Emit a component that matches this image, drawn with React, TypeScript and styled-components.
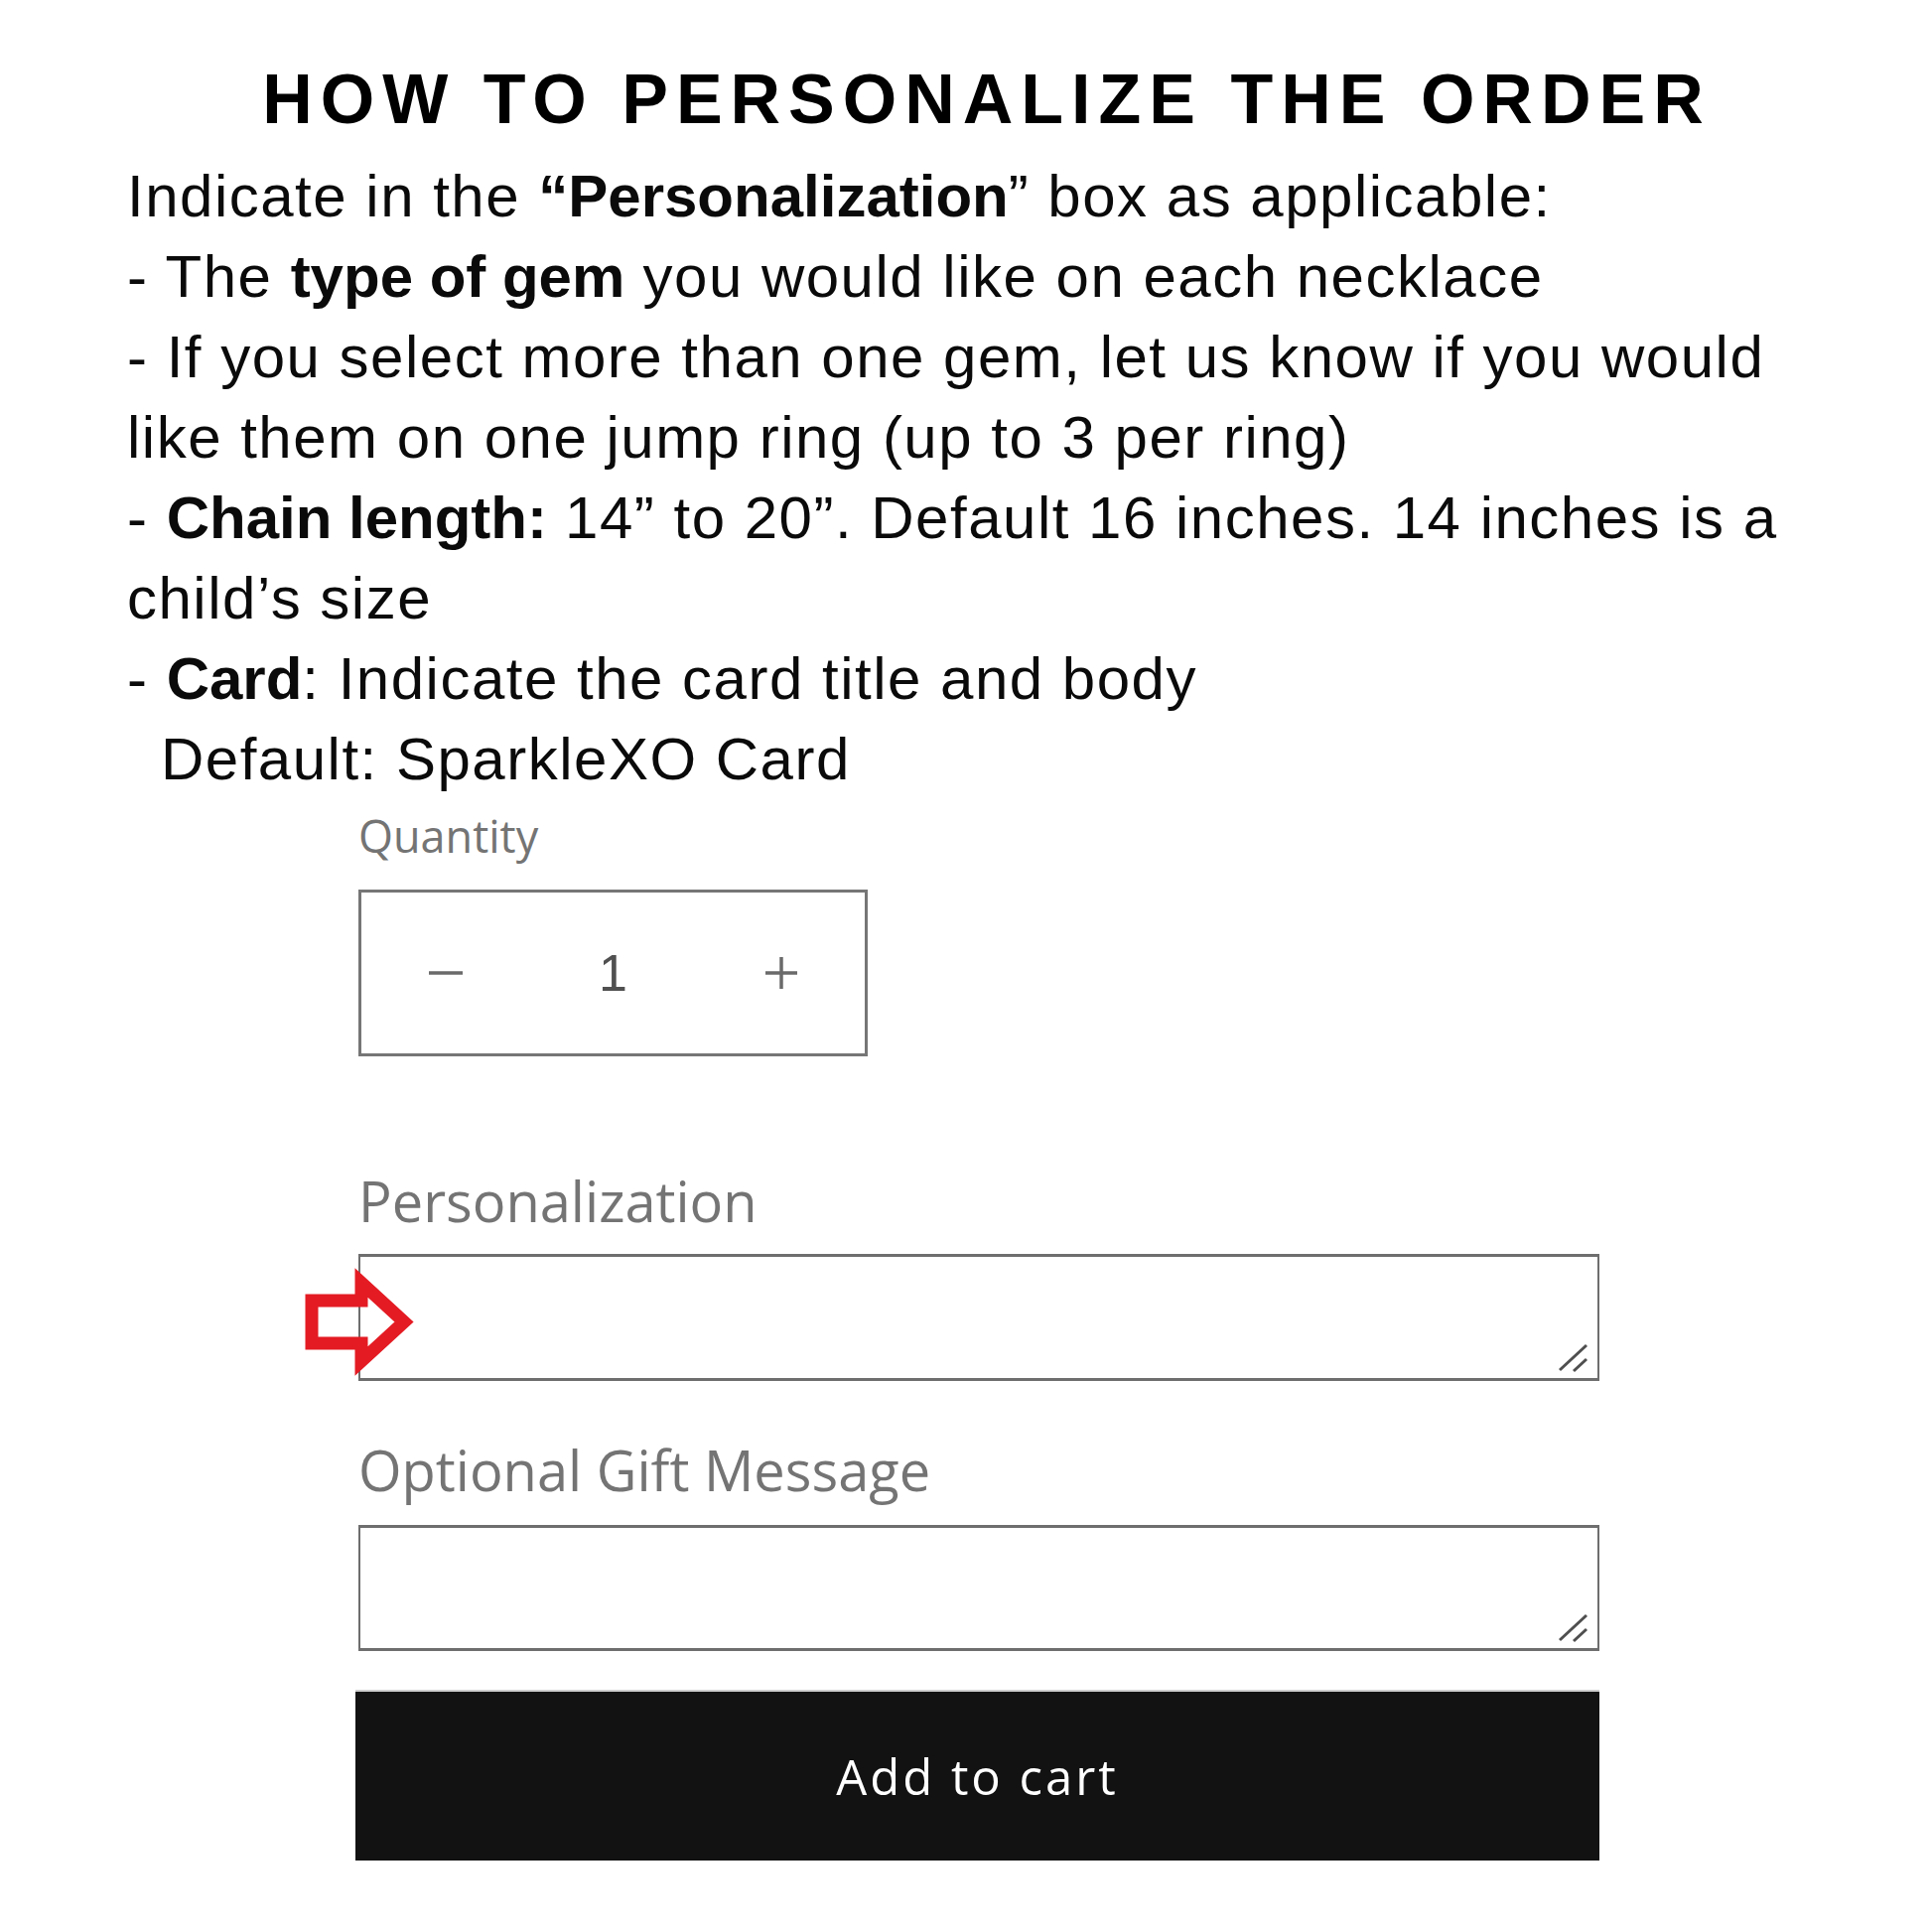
import * as React from 'react'
import styled, { createGlobalStyle } from 'styled-components'

const GlobalStyle = createGlobalStyle`
  html, body {
    margin: 0;
    padding: 0;
    background: #fff;
  }
  body {
    font-family: 'Liberation Sans', Arial, sans-serif;
    color: #000;
  }
`

export default function App() {
  return (
    <>
      <GlobalStyle />
      <Page>
        <Title>HOW TO PERSONALIZE THE ORDER</Title>
        <Instructions>
          <Line>
            Indicate in the <b>“Personalization</b>” box as applicable:
          </Line>
          <Line>
            - The <b>type of gem</b> you would like on each necklace
          </Line>
          <Line>- If you select more than one gem, let us know if you would</Line>
          <Line>like them on one jump ring (up to 3 per ring)</Line>
          <Line>
            - <b>Chain length:</b> 14” to 20”. Default 16 inches. 14 inches is a
          </Line>
          <Line>child’s size</Line>
          <Line>
            - <b>Card</b>: Indicate the card title and body
          </Line>
          <Line $indent>Default: SparkleXO Card</Line>
        </Instructions>

        <Form onSubmit={e => e.preventDefault()}>
          <Label htmlFor='Quantity' $size={45} $gap={10}>
            Quantity
          </Label>
          <QuantityBox>
            <StepButton type='button' aria-label='Decrease quantity'>
              <svg width='36' height='36' viewBox='0 0 36 36'>
                <line x1='1' y1='18' x2='35' y2='18' stroke='#6a6a6a' strokeWidth='3.5' />
              </svg>
            </StepButton>
            <QuantityInput id='Quantity' type='text' defaultValue='1' />
            <StepButton type='button' aria-label='Increase quantity'>
              <svg width='34' height='34' viewBox='0 0 34 34'>
                <line x1='1' y1='17' x2='33' y2='17' stroke='#6a6a6a' strokeWidth='3.5' />
                <line x1='17' y1='1' x2='17' y2='33' stroke='#6a6a6a' strokeWidth='3.5' />
              </svg>
            </StepButton>
          </QuantityBox>

          <Label htmlFor='Personalization' $size={56} $gap={112}>
            Personalization
          </Label>
          <FieldWrap $gap={20}>
            <TextArea id='Personalization' $height={128} />
            <Arrow width='112' height='100' viewBox='0 0 112 100'>
              <polygon
                points='6,28 56,28 56,10 99,49.5 56,89 56,71 6,71'
                fill='none'
                stroke='#e41b23'
                strokeWidth='13'
                strokeLinejoin='miter'
              />
            </Arrow>
            <ResizeHandle />
          </FieldWrap>

          <Label htmlFor='GiftMessage' $size={56} $gap={56}>
            Optional Gift Message
          </Label>
          <FieldWrap $gap={22}>
            <TextArea id='GiftMessage' $height={127} />
            <ResizeHandle />
          </FieldWrap>

          <CartButton type='submit'>Add to cart</CartButton>
        </Form>
      </Page>
    </>
  )
}

function ResizeHandle() {
  return (
    <Handle width='34' height='32' viewBox='0 0 34 32'>
      <line x1='2' y1='28' x2='29' y2='3' stroke='#4f4f4f' strokeWidth='3' />
      <line x1='16' y1='29' x2='29' y2='17' stroke='#4f4f4f' strokeWidth='3' />
    </Handle>
  )
}

const Page = styled.main`
  width: 1946px;
  padding-top: 65px;
  box-sizing: border-box;
`

const Title = styled.h1`
  margin: 0;
  padding-left: 42px;
  text-align: center;
  font-family: 'Liberation Sans', Arial, sans-serif;
  font-weight: 700;
  font-size: 70px;
  line-height: 70px;
  letter-spacing: 8px;
  color: #000;
`

const Instructions = styled.div`
  margin: 22px 0 0 128px;
  font-size: 60px;
  line-height: 81px;
  letter-spacing: 1.5px;
  color: #0a0a0a;

  b {
    font-weight: 700;
    letter-spacing: 0;
  }
`

const Line = styled.div<{ $indent?: boolean }>`
  white-space: nowrap;
  padding-left: ${p => (p.$indent ? '34px' : '0')};
`

const Form = styled.form`
  margin-left: 361px;
  width: 1250px;
  display: flex;
  flex-direction: column;
  align-items: flex-start;
`

const Label = styled.label<{ $size: number; $gap: number }>`
  margin-top: ${p => p.$gap}px;
  font-family: 'Open Sans', 'Noto Sans', sans-serif;
  font-size: ${p => p.$size}px;
  line-height: 1.2;
  color: #747474;
`

const QuantityBox = styled.div`
  margin-top: 27px;
  width: 513px;
  height: 168px;
  box-sizing: border-box;
  border: 3px solid #767676;
  display: grid;
  grid-template-columns: 1fr 1fr 1fr;
  align-items: center;
  justify-items: center;
`

const StepButton = styled.button`
  border: 0;
  background: none;
  padding: 0;
  display: flex;
  align-items: center;
  justify-content: center;
  cursor: pointer;
`

const QuantityInput = styled.input`
  width: 100%;
  border: 0;
  background: none;
  text-align: center;
  font-family: 'Liberation Sans', Arial, sans-serif;
  font-size: 52px;
  color: #505050;
  outline: none;
  padding: 0;
`

const FieldWrap = styled.div<{ $gap: number }>`
  position: relative;
  margin-top: ${p => p.$gap}px;
  width: 100%;
`

const TextArea = styled.textarea<{ $height: number }>`
  display: block;
  width: 100%;
  height: ${p => p.$height}px;
  box-sizing: border-box;
  border: 3px solid #6e6e6e;
  border-right-width: 2px;
  border-left-width: 2px;
  resize: none;
  outline: none;
  font-family: 'Open Sans', 'Noto Sans', sans-serif;
  font-size: 40px;
`

const Arrow = styled.svg`
  position: absolute;
  left: -53px;
  top: 19px;
  overflow: visible;
`

const Handle = styled.svg`
  position: absolute;
  right: 8px;
  bottom: 7px;
`

const CartButton = styled.button`
  margin-top: 39px;
  margin-left: -3px;
  width: 1253px;
  height: 172px;
  box-sizing: border-box;
  border: 0;
  border-top: 2px solid #cfcfcf;
  background: #121212;
  color: #fff;
  font-family: 'Open Sans', 'Noto Sans', sans-serif;
  font-size: 49px;
  letter-spacing: 3px;
  cursor: pointer;
`
